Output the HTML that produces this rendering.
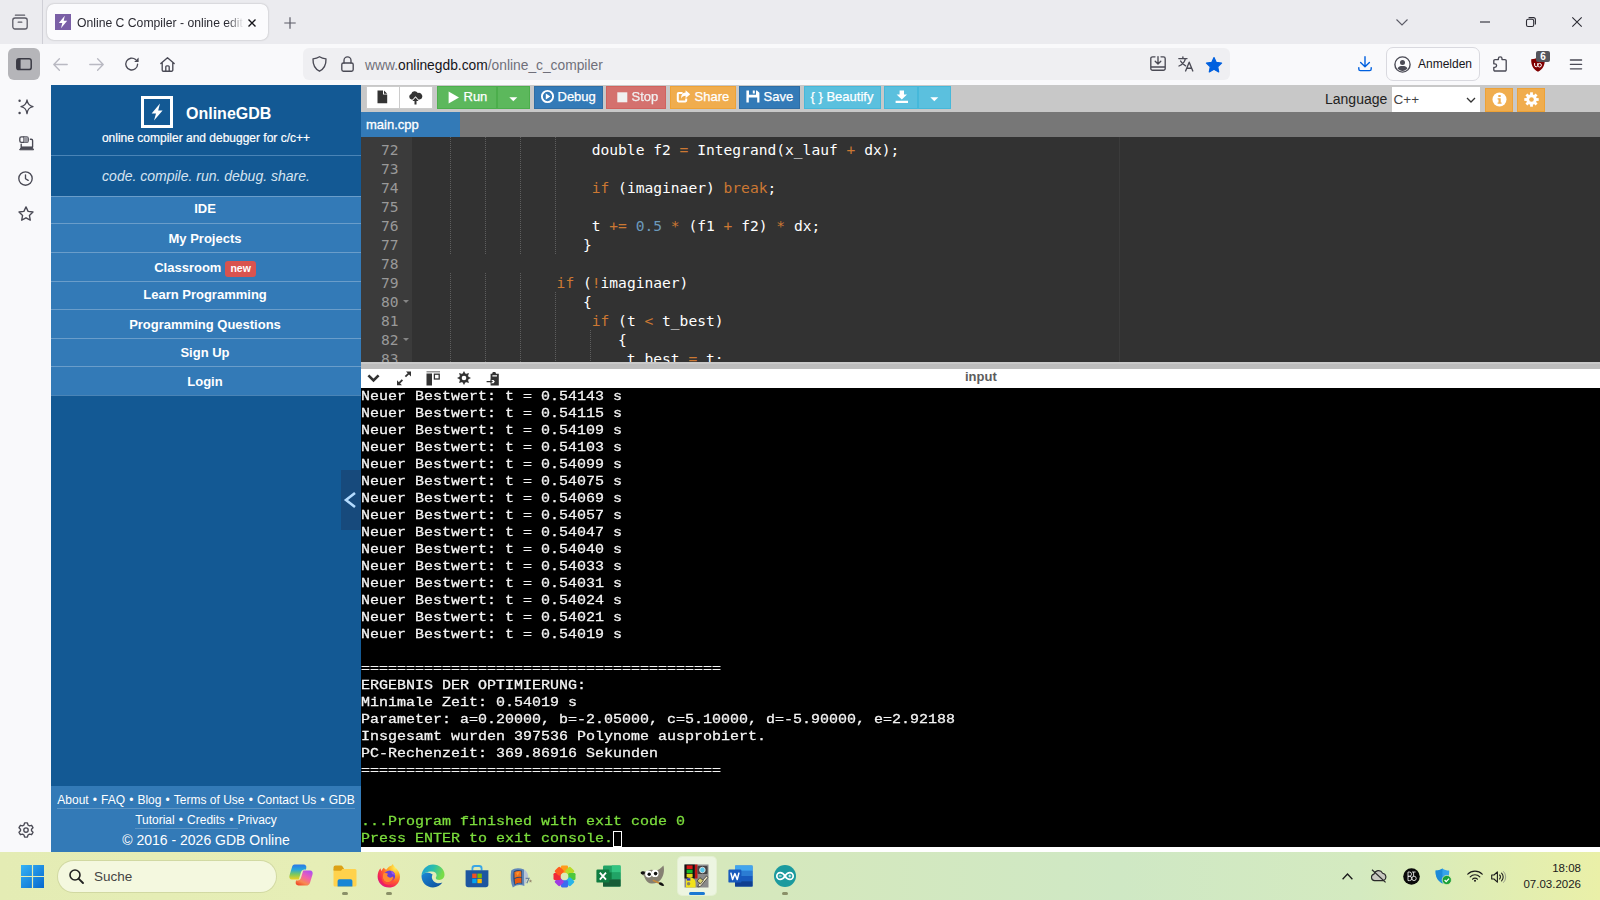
<!DOCTYPE html>
<html lang="de">
<head>
<meta charset="utf-8">
<title>Online C Compiler - online editor</title>
<style>
*{box-sizing:border-box;margin:0;padding:0}
html,body{width:1600px;height:900px;overflow:hidden;background:#f9f9fb;font-family:"Liberation Sans",sans-serif}
.abs{position:absolute}
#tabbar{position:absolute;left:0;top:0;width:1600px;height:44px;background:#ebebef}
#navbar{position:absolute;left:0;top:44px;width:1600px;height:41px;background:#f9f9fb}
#ffside{position:absolute;left:0;top:85px;width:51px;height:767px;background:#f9f9fb}
#page{position:absolute;left:51px;top:85px;width:1549px;height:767px;background:#000;overflow:hidden}
#taskbar{position:absolute;left:0;top:852px;width:1600px;height:48px;background:linear-gradient(90deg,#e4ecb4 0%,#e6eeb6 20%,#d6e8bc 45%,#cfe8c4 70%,#d4eac0 85%,#eaf0a8 100%)}

/* ---- browser chrome ---- */
#tabbar svg,#navbar svg,#ffside svg,#taskbar svg{position:absolute;overflow:visible}
#tsep{position:absolute;left:42px;top:0;width:1px;height:44px;background:#cfcfd6}
#tab{position:absolute;left:47px;top:4px;width:221px;height:36px;background:#fbfbfd;border-radius:7px;box-shadow:0 0 2px rgba(0,0,0,.28)}
#fav{position:absolute;left:8px;top:10px;width:16px;height:16px;background:#7a5fa6}
#ttl{position:absolute;left:30px;top:10px;width:168px;height:18px;overflow:hidden;white-space:nowrap;font-size:12.2px;line-height:18px;color:#2a2a32;-webkit-mask-image:linear-gradient(90deg,#000 0,#000 150px,transparent 167px);mask-image:linear-gradient(90deg,#000 0,#000 150px,transparent 167px)}
#sbtn{position:absolute;left:8px;top:4px;width:32px;height:32px;border-radius:6px;background:#b5b5b9}
#url{position:absolute;left:303px;top:4px;width:927px;height:32px;border-radius:6px;background:#efeff2}
#urlt{position:absolute;left:62px;top:7.5px;font-size:13.8px;line-height:20px;color:#15141a;white-space:nowrap}
#urlt i{font-style:normal;color:#6f6f7a}
#anm{position:absolute;left:1386px;top:3px;width:94px;height:34px;border:1px solid #d9d9df;border-radius:7px;background:#fbfbfd}
#anmt{position:absolute;left:31px;top:8px;font-size:12px;line-height:16px;color:#15141a;white-space:nowrap}
#ubadge{position:absolute;left:1536px;top:7px;width:14px;height:11px;background:#55555c;border-radius:2px;color:#fff;font-size:10px;font-weight:bold;line-height:11px;text-align:center}

/* ---- taskbar ---- */
#srch{position:absolute;left:58px;top:8.5px;width:218px;height:31px;border-radius:16px;background:#f4f8df;box-shadow:0 0 0 1px rgba(120,130,80,.18)}
#srcht{position:absolute;left:36px;top:7px;font-size:13.5px;line-height:17px;color:#444;white-space:nowrap}
#actv{position:absolute;left:678px;top:5px;width:38px;height:38px;border-radius:4px;background:rgba(255,255,255,.55);box-shadow:0 0 0 1px rgba(255,255,255,.35)}
.dot{position:absolute;top:40px;width:6px;height:3px;border-radius:1.5px;background:#8a9068}
#clk{position:absolute;right:19px;top:9px;text-align:right;font-size:11.5px;line-height:15.7px;color:#1b1b1b;white-space:nowrap}
/* --- left panel --- */
#left{position:absolute;left:0;top:0;width:310px;height:767px;background:#135994;color:#fff}
#main{position:absolute;left:310px;top:0;width:1239px;height:767px}

/* left panel content */
#logo{position:absolute;left:90px;top:11px;width:32px;height:32px;border:3px solid #fff}
#brand{position:absolute;left:135px;top:19px;font-size:16px;font-weight:bold;line-height:20px;white-space:nowrap}
#sub{-webkit-text-stroke:.2px #fff;position:absolute;left:0;top:46px;width:310px;text-align:center;font-size:12px;line-height:14px;white-space:nowrap}
.hl{position:absolute;left:0;width:310px;height:1px;background:#4a84b6}
#slogan{position:absolute;left:0;top:82px;width:310px;text-align:center;font-size:14px;font-style:italic;line-height:18px;color:#d6e4f0;white-space:nowrap}
#menu{position:absolute;left:0;top:111px;width:310px;height:199px;background:#337ab7}
.mi{position:absolute;left:0;width:310px;height:29px;border-top:1px solid #6a9dca;text-align:center;padding-right:2px;font-size:13px;font-weight:bold;line-height:27px;white-space:nowrap;color:#fff}
.new{display:inline-block;background:#d9534f;color:#fff;font-size:10.5px;font-weight:bold;line-height:11px;padding:2px 5px 3px;border-radius:3px;vertical-align:0;margin-left:4px}
#foot{position:absolute;left:0;top:701px;width:310px;height:66px;background:#337ab7;color:#fff;text-align:center}
#foot .l{position:absolute;left:0;width:310px;text-align:center;font-size:12px;line-height:14px;white-space:nowrap}
#foot .l span.u{border-bottom:1px solid rgba(255,255,255,.2);padding-bottom:1px}
#foot .l i{font-style:normal;padding:0 4.1px}
#foot .c{position:absolute;left:0;top:45px;width:310px;font-size:14px;line-height:18px;white-space:nowrap}
#handle{position:absolute;left:290px;top:385px;width:20px;height:60px;background:#174a7c}
/* --- toolbar --- */
#toolbar{position:absolute;left:0;top:0;width:1239px;height:27px;background:#c8c8c8}

.btn{position:absolute;top:1px;height:22.5px;border:1px solid;color:#fff;font-size:13px;line-height:20.5px;white-space:nowrap}
.btn span{position:absolute;top:0;-webkit-text-stroke:.25px #fff}
.btn svg{position:absolute}
.bw{background:#fff;border-color:#ccc}
.bg{background:#5cb85c;border-color:#4cae4c}
.bp{background:#337ab7;border-color:#2e6da4}
.bd{background:#d9534f;border-color:#d43f3a;opacity:.74}
.bo{background:#f0ad4e;border-color:#eea236}
.bi{background:#5bc0de;border-color:#46b8da}
#lang{position:absolute;left:964px;top:5px;font-size:14px;line-height:18px;color:#222;white-space:nowrap}
#sel{position:absolute;left:1031px;top:2px;width:88px;height:24.5px;background:#fff;font-size:13.5px;line-height:25px;color:#444;padding-left:1.5px}
#tab1{-webkit-text-stroke:.3px #fff;position:absolute;left:0;top:0;width:99px;height:25px;background:#337ab7;color:#fff;font-size:13px;line-height:26px;padding-left:5px;white-space:nowrap}
#tabs{position:absolute;left:0;top:27px;width:1239px;height:25px;background:#777}
#editor{position:absolute;left:0;top:52px;width:1239px;height:225px;background:#323232;overflow:hidden}

#gutter{position:absolute;left:0;top:0;width:51px;height:225px;background:#3b3b3b}
.ln{position:absolute;left:0;width:37.5px;text-align:right;color:#999;font:14.6px/19px "DejaVu Sans Mono","Liberation Mono",monospace;height:19px;white-space:pre}
.cl{position:absolute;left:55px;color:#fff;font:14.6px/19px "DejaVu Sans Mono","Liberation Mono",monospace;height:19px;white-space:pre}
.k{color:#cc7833}.n{color:#6c99bb}
.ig{position:absolute;width:1px;background:repeating-linear-gradient(180deg,#5e5e5e 0,#5e5e5e 1px,transparent 1px,transparent 2px)}
.fa{position:absolute;left:42px;width:0;height:0;border-left:3px solid transparent;border-right:3px solid transparent;border-top:3.5px solid #858585}
#pm{position:absolute;left:758px;top:0;width:1px;height:225px;background:#3b3b3b}
#split{position:absolute;left:0;top:277px;width:1239px;height:6.5px;background:linear-gradient(180deg,#c9c9c9 0,#c9c9c9 2px,#bdbdbd 2px,#bdbdbd 100%)}
#ctool{position:absolute;left:0;top:283.5px;width:1239px;height:19.5px;background:#fff}
#console{position:absolute;left:0;top:303px;width:1239px;height:459px;background:#000}

#ctool svg{position:absolute}
#inlab{position:absolute;left:604px;top:-0.5px;font-size:13px;font-weight:bold;line-height:17px;color:#5c5c5c;white-space:nowrap}
#con{position:absolute;left:0;top:0;font:normal 15px/17px "Liberation Mono",monospace;color:#f4f4f4;-webkit-text-stroke:.32px currentColor}
#con div{position:absolute;left:0;height:17px;white-space:pre;transform:scaleY(.82);transform-origin:0 12.5px}
#con .g{color:#7bdc3c}
#cur{position:absolute;left:252px;top:442.5px;width:9px;height:16px;border:1px solid #fff}
#cbottom{position:absolute;left:0;top:762px;width:1239px;height:5px;background:#fff}
</style>
</head>
<body>
<div id="tabbar">
  <svg style="left:12px;top:14px" width="16" height="16" viewBox="0 0 16 16"><g fill="none" stroke="#5b5b66" stroke-width="1.3" stroke-linecap="round" stroke-linejoin="round"><path d="M3.4 1.2 H12.6"/><rect x="0.8" y="4" width="14.4" height="11" rx="2.2"/><path d="M6.2 8.2 H9.8"/></g></svg>
  <div id="tsep"></div>
  <div id="tab"><div id="fav"><svg style="left:0;top:0" width="16" height="16" viewBox="0 0 16 16"><path d="M9.8 1.8 L3.8 9 H7.3 L6 14.2 L12.2 6.8 H8.7 Z" fill="#fff"/></svg></div><div id="ttl">Online C Compiler - online editor</div>
    <svg style="left:201px;top:14.5px" width="8" height="8" viewBox="0 0 8 8"><path d="M0.5 0.5 L7.5 7.5 M7.5 0.5 L0.5 7.5" fill="none" stroke="#15141a" stroke-width="1.4"/></svg></div>
  <svg style="left:284px;top:17px" width="12" height="12" viewBox="0 0 12 12"><path d="M6 0.3 V11.7 M0.3 6 H11.7" fill="none" stroke="#5b5b66" stroke-width="1.2"/></svg>
  <svg style="left:1396px;top:18.5px" width="12" height="7" viewBox="0 0 12 7"><path d="M0.5 0.5 L6 6 L11.5 0.5" fill="none" stroke="#5b5b66" stroke-width="1.1"/></svg>
  <svg style="left:1480px;top:20.5px" width="10" height="2" viewBox="0 0 10 2"><path d="M0 1 H10" stroke="#2b2a33" stroke-width="1.1"/></svg>
  <svg style="left:1526px;top:16.5px" width="10" height="10" viewBox="0 0 10 10"><g fill="none" stroke="#2b2a33" stroke-width="1.1"><rect x="0.5" y="2.3" width="7.2" height="7.2" rx="1.6"/><path d="M2.6 0.6 H7.6 A1.8 1.8 0 0 1 9.4 2.4 V7.4"/></g></svg>
  <svg style="left:1572px;top:17px" width="10" height="10" viewBox="0 0 10 10"><path d="M0.3 0.3 L9.7 9.7 M9.7 0.3 L0.3 9.7" fill="none" stroke="#2b2a33" stroke-width="1.1"/></svg>
</div>
<div id="navbar">
  <div id="sbtn"><svg style="left:8px;top:9.5px" width="16" height="13" viewBox="0 0 16 13"><rect x="0.8" y="0.8" width="14.4" height="10.8" rx="2.2" fill="none" stroke="#3a3a44" stroke-width="1.5"/><path d="M0.8 3 A2.2 2.2 0 0 1 3 0.8 H4.6 V11.6 H3 A2.2 2.2 0 0 1 0.8 9.4 Z" fill="#3a3a44"/></svg></div>
  <svg style="left:53px;top:14px" width="15" height="13" viewBox="0 0 15 13"><path d="M6.4 0.8 L0.8 6.5 L6.4 12.2 M1 6.5 H14.2" fill="none" stroke="#b9b9c2" stroke-width="1.35" stroke-linecap="round" stroke-linejoin="round"/></svg>
  <svg style="left:89px;top:14px" width="15" height="13" viewBox="0 0 15 13"><path d="M8.6 0.8 L14.2 6.5 L8.6 12.2 M14 6.5 H0.8" fill="none" stroke="#b9b9c2" stroke-width="1.35" stroke-linecap="round" stroke-linejoin="round"/></svg>
  <svg style="left:125px;top:13px" width="15" height="14" viewBox="0 0 15 14"><path d="M12.6 7.2 A5.9 5.9 0 1 1 10.6 2.6" fill="none" stroke="#4a4a55" stroke-width="1.35" stroke-linecap="round" stroke-linejoin="round"/><path d="M13.6 0.6 V5 H9.2 Z" fill="#4a4a55"/></svg>
  <svg style="left:160px;top:13px" width="15" height="15" viewBox="0 0 15 15"><path d="M0.8 6.6 L7.5 0.8 L14.2 6.6 M2.2 5.6 V13 A1.2 1.2 0 0 0 3.4 14.2 H11.6 A1.2 1.2 0 0 0 12.8 13 V5.6 M5.8 14 V9.8 A1 1 0 0 1 6.8 8.8 H8.2 A1 1 0 0 1 9.2 9.8 V14" fill="none" stroke="#4a4a55" stroke-width="1.35" stroke-linecap="round" stroke-linejoin="round"/></svg>
  <div id="url">
    <svg style="left:9px;top:8px" width="15" height="16" viewBox="0 0 15 16"><path d="M7.5 0.8 C5.6 2 3.4 2.6 1 2.8 C0.8 8.6 2.6 12.8 7.5 15.2 C12.4 12.8 14.2 8.6 14 2.8 C11.6 2.6 9.4 2 7.5 0.8 Z" fill="none" stroke="#4a4a55" stroke-width="1.35" stroke-linecap="round" stroke-linejoin="round"/></svg>
    <svg style="left:38px;top:8px" width="13" height="16" viewBox="0 0 13 16"><rect x="0.8" y="7" width="11.4" height="8.2" rx="1.6" fill="none" stroke="#4a4a55" stroke-width="1.35" stroke-linecap="round" stroke-linejoin="round"/><path d="M3 7 V4.4 A3.5 3.5 0 0 1 10 4.4 V7" fill="none" stroke="#4a4a55" stroke-width="1.35" stroke-linecap="round" stroke-linejoin="round"/></svg>
    <div id="urlt"><i>www.</i>onlinegdb.com<i>/online_c_compiler</i></div>
    <svg style="left:847px;top:8px" width="16" height="15" viewBox="0 0 16 15"><path d="M5 0.8 H2.6 A1.8 1.8 0 0 0 0.8 2.6 V12.4 A1.8 1.8 0 0 0 2.6 14.2 H13.4 A1.8 1.8 0 0 0 15.2 12.4 V2.6 A1.8 1.8 0 0 0 13.4 0.8 H11 M0.8 11 H15.2 M8 0.6 V7.6 M5.2 5.2 L8 8 L10.8 5.2" fill="none" stroke="#4a4a55" stroke-width="1.35" stroke-linecap="round" stroke-linejoin="round"/></svg>
    <svg style="left:875px;top:8px" width="16" height="16" viewBox="0 0 16 16"><path d="M0.8 2.6 H9 M4.9 0.8 V2.6 M7.4 2.6 C6.8 5.6 4.6 8.4 1 10 M2.6 5 C3.6 7 5.4 8.8 7.6 9.8 M7.6 15 L11.2 6.2 L14.8 15 M8.8 12.2 H13.6" fill="none" stroke="#4a4a55" stroke-width="1.35" stroke-linecap="round" stroke-linejoin="round"/></svg>
    <svg style="left:902px;top:8.5px" width="18" height="16" viewBox="0 0 18 16"><path d="M9 0.6 L11.3 5.4 L16.6 6.1 L12.7 9.7 L13.7 14.9 L9 12.3 L4.3 14.9 L5.3 9.7 L1.4 6.1 L6.7 5.4 Z" fill="#0060df" stroke="#0060df" stroke-width="1.2" stroke-linejoin="round"/></svg>
  </div>
  <svg style="left:1358px;top:12px" width="14" height="16" viewBox="0 0 14 16"><path d="M7 0.8 V10.4 M2.6 6.4 L7 10.8 L11.4 6.4 M0.8 11.6 V13 A1.6 1.6 0 0 0 2.4 14.6 H11.6 A1.6 1.6 0 0 0 13.2 13 V11.6" fill="none" stroke="#0060df" stroke-width="1.4" stroke-linecap="round" stroke-linejoin="round"/></svg>
  <div id="anm"><svg style="left:7px;top:8px" width="17" height="17" viewBox="0 0 17 17"><circle cx="8.5" cy="8.5" r="7.6" fill="none" stroke="#4a4a55" stroke-width="1.4"/><circle cx="8.5" cy="6.6" r="2.5" fill="#4a4a55"/><path d="M3.6 12.6 C4.4 10.6 6 10 8.5 10 C11 10 12.6 10.6 13.4 12.6 C12 14.2 10.4 15 8.5 15 C6.6 15 5 14.2 3.6 12.6 Z" fill="#4a4a55"/></svg><div id="anmt">Anmelden</div></div>
  <svg style="left:1493px;top:12px" width="15" height="16" viewBox="0 0 15 16"><path d="M5.4 3.6 V2.6 A1.8 1.8 0 0 1 9 2.6 V3.6 H12 A1.2 1.2 0 0 1 13.2 4.8 V13.8 A1.2 1.2 0 0 1 12 15 H2 A1.2 1.2 0 0 1 0.8 13.8 V11.4 H1.8 A1.8 1.8 0 0 0 1.8 7.8 H0.8 V4.8 A1.2 1.2 0 0 1 2 3.6 Z" fill="none" stroke="#4a4a55" stroke-width="1.35" stroke-linecap="round" stroke-linejoin="round"/></svg>
  <svg style="left:1531px;top:13px" width="14" height="15" viewBox="0 0 14 15"><path d="M7 0.2 C5 1.4 2.8 2 0.2 2.2 C0 8 2 12.2 7 14.8 C12 12.2 14 8 13.8 2.2 C11.2 2 9 1.4 7 0.2 Z" fill="#800000"/><path d="M3.6 6 V8.2 A1.6 1.6 0 0 0 6.8 8.2 V6 M6.8 8.2 A1.8 1.8 0 1 0 10.4 8.2 A1.8 1.8 0 1 0 6.8 8.2" fill="none" stroke="#fff" stroke-width="1"/></svg>
  <div id="ubadge">6</div>
  <svg style="left:1570px;top:14.5px" width="12" height="11" viewBox="0 0 12 11"><path d="M0.4 1 H11.6 M0.4 5.4 H11.6 M0.4 9.8 H11.6" fill="none" stroke="#4a4a55" stroke-width="1.3" stroke-linecap="round"/></svg>
</div>
<div id="ffside">
  <svg style="left:18px;top:14px" width="16" height="16" viewBox="0 0 16 16"><path d="M9 1 C9.6 5 11 6.6 15 7.6 C11 8.6 9.6 10.2 9 14.6 C8.4 10.2 7 8.6 3 7.6 C7 6.6 8.4 5 9 1 Z" fill="none" stroke="#4a4a55" stroke-width="1.35" stroke-linecap="round" stroke-linejoin="round"/><circle cx="1.6" cy="1.8" r="1.2" fill="#4a4a55"/><circle cx="1.6" cy="14" r="1.2" fill="#4a4a55"/></svg>
  <svg style="left:19px;top:51px" width="15" height="15" viewBox="0 0 15 15"><rect x="0.8" y="0.8" width="8.4" height="5.6" rx="1.6" fill="none" stroke="#4a4a55" stroke-width="1.35" stroke-linecap="round" stroke-linejoin="round"/><path d="M5 0.8 V6.4" fill="none" stroke="#4a4a55" stroke-width="1.35" stroke-linecap="round" stroke-linejoin="round"/><path d="M5 0.8 H7.4 A1.6 1.6 0 0 1 9 2.4 V4.8 A1.6 1.6 0 0 1 7.4 6.4 H5 Z" fill="#9a9aa2"/><path d="M11.4 3.2 H12.2 A1.4 1.4 0 0 1 13.6 4.6 V11 M2.2 8.2 V11 M2.2 11.2 H13.4" fill="none" stroke="#4a4a55" stroke-width="1.35" stroke-linecap="round" stroke-linejoin="round"/><path d="M0.6 13.8 L2.2 11.4 H13.2 L14.6 13.8 Z" fill="#4a4a55" stroke="#4a4a55" stroke-width="1" stroke-linejoin="round"/></svg>
  <svg style="left:18px;top:85.5px" width="15" height="15" viewBox="0 0 15 15"><circle cx="7.5" cy="7.5" r="6.7" fill="none" stroke="#4a4a55" stroke-width="1.35" stroke-linecap="round" stroke-linejoin="round"/><path d="M7.5 3.8 V7.7 L10.2 9.4" fill="none" stroke="#4a4a55" stroke-width="1.35" stroke-linecap="round" stroke-linejoin="round"/></svg>
  <svg style="left:18px;top:120.5px" width="16" height="15" viewBox="0 0 16 15"><path d="M8 0.9 L10.1 5.4 L15 6 L11.4 9.4 L12.3 14.2 L8 11.8 L3.7 14.2 L4.6 9.4 L1 6 L5.9 5.4 Z" fill="none" stroke="#4a4a55" stroke-width="1.35" stroke-linecap="round" stroke-linejoin="round"/></svg>
  <svg style="left:18px;top:737px" width="16" height="16" viewBox="0 0 16 16"><path d="M6.6 0.9 H9.4 L10 3 L11.5 3.9 L13.6 3.3 L15 5.7 L13.5 7.2 V8.8 L15 10.3 L13.6 12.7 L11.5 12.1 L10 13 L9.4 15.1 H6.6 L6 13 L4.5 12.1 L2.4 12.7 L1 10.3 L2.5 8.8 V7.2 L1 5.7 L2.4 3.3 L4.5 3.9 L6 3 Z" fill="none" stroke="#4a4a55" stroke-width="1.35" stroke-linecap="round" stroke-linejoin="round"/><circle cx="8" cy="8" r="2.2" fill="none" stroke="#4a4a55" stroke-width="1.35" stroke-linecap="round" stroke-linejoin="round"/></svg>
</div>
<div id="page">
  <div id="left">
    <div id="logo"><svg width="26" height="26" viewBox="0 0 26 26"><path d="M16 4.6 L7.6 14.4 L12 14.4 L10 21.4 L18.6 11.4 L14.2 11.4 Z" fill="#fff"/></svg></div>
    <div id="brand">OnlineGDB</div>
    <div id="sub">online compiler and debugger for c/c++</div>
    <div class="hl" style="top:70px"></div>
    <div id="slogan">code. compile. run. debug. share.</div>
    <div id="menu">
      <div class="mi" style="top:0;line-height:24px">IDE</div>
      <div class="mi" style="top:27px;line-height:29px">My Projects</div>
      <div class="mi" style="top:56px;line-height:29px">Classroom<span class="new">new</span></div>
      <div class="mi" style="top:84.5px;line-height:26px">Learn Programming</div>
      <div class="mi" style="top:113px;line-height:29px">Programming Questions</div>
      <div class="mi" style="top:141.5px;line-height:28px">Sign Up</div>
      <div class="mi" style="top:170px;line-height:29px">Login</div>
    </div>
    <div class="hl" style="top:310px"></div>
    <div id="foot">
      <div class="l" style="top:7px"><span class="u">About<i>•</i>FAQ<i>•</i>Blog<i>•</i>Terms of Use<i>•</i>Contact Us<i>•</i>GDB</span></div>
      <div class="l" style="top:27px"><span class="u">Tutorial<i>•</i>Credits<i>•</i></span>Privacy</div>
      <div class="c">© 2016 - 2026 GDB Online</div>
    </div>
    <div id="handle"><svg width="20" height="60" viewBox="0 0 20 60"><path d="M14 23 L5 30 L14 37" fill="none" stroke="#b4dcff" stroke-width="2.6"/></svg></div>
  </div>
  <div id="main">
    <div id="toolbar">
      <div class="btn bw" style="left:5px;width:34px"><svg style="left:9.5px;top:3px" width="11" height="14" viewBox="0 0 11 14"><path d="M0.5 0.5 H6 V4.6 H10.2 V13.2 H0.5 Z M7 0.5 L10.2 3.7 H7 Z" fill="#333"/></svg></div>
      <div class="btn bw" style="left:38px;width:33.5px"><svg style="left:8px;top:3.5px" width="15" height="14" viewBox="0 0 15 14"><path d="M3.4 8.6 A3 3 0 0 1 3.2 2.9 A3.6 3.6 0 0 1 9.8 2 A3.3 3.3 0 0 1 11.8 8.6 H10.4 L7.5 5.2 L4.6 8.6 Z" fill="#333"/><path d="M7.5 6.4 L10.6 10 H8.5 V13.4 H6.5 V10 H4.4 Z" fill="#333"/></svg></div>
      <div class="btn bg" style="left:76px;width:60px"><svg style="left:9.5px;top:4px" width="12" height="13" viewBox="0 0 12 13"><path d="M0.6 0.4 L11 6.4 L0.6 12.4 Z" fill="#fff"/></svg><span style="left:25.5px">Run</span></div>
      <div class="btn bg" style="left:135.5px;width:33.5px"><svg style="left:11.5px;top:10px" width="9" height="5" viewBox="0 0 9 5"><path d="M0.3 0.3 H8.3 L4.3 4.3 Z" fill="#fff"/></svg></div>
      <div class="btn bp" style="left:173px;width:69px"><svg style="left:4.5px;top:1.5px" width="15" height="15" viewBox="0 0 15 15"><circle cx="7.5" cy="7.5" r="5.6" fill="none" stroke="#fff" stroke-width="1.9"/><path d="M5.8 4.6 L10.4 7.5 L5.8 10.4 Z" fill="#fff"/></svg><span style="left:22.5px">Debug</span></div>
      <div class="btn bd" style="left:245px;width:59.5px"><svg style="left:9.5px;top:4.5px" width="11" height="11" viewBox="0 0 11 11"><rect x="0.3" y="0.3" width="10" height="10" fill="#fff"/></svg><span style="left:24.5px">Stop</span></div>
      <div class="btn bo" style="left:309px;width:66px"><svg style="left:4.5px;top:2.5px" width="15" height="13" viewBox="0 0 15 13"><path d="M9.2 10.4 V8.6 H11.2 V10.6 A1.8 1.8 0 0 1 9.4 12.4 H2.6 A1.8 1.8 0 0 1 0.8 10.6 V3.8 A1.8 1.8 0 0 1 2.6 2 H6.6 V4 H3 A0.3 0.3 0 0 0 2.8 4.3 V10.1 A0.3 0.3 0 0 0 3 10.4 Z" fill="#fff"/><path d="M9.6 0.2 L14.2 4.2 L9.6 8.2 V5.8 C7.4 5.8 6 6.6 5.2 8.8 C5 5 6.6 2.8 9.6 2.6 Z" fill="#fff"/></svg><span style="left:23.5px">Share</span></div>
      <div class="btn bp" style="left:378px;width:61px"><svg style="left:6px;top:3px" width="14" height="13" viewBox="0 0 14 13"><path d="M0.4 0.4 H3 V4.8 H10 V0.4 H11 L13.4 2.8 V12.4 H11.2 V7.6 H2.8 V12.4 H0.4 Z M6.8 0.4 H8.8 V3.6 H6.8 Z" fill="#fff"/></svg><span style="left:23.5px">Save</span></div>
      <div class="btn bi" style="left:443px;width:77px"><span style="left:5.5px">{ } Beautify</span></div>
      <div class="btn bi" style="left:523px;width:34px"><svg style="left:10px;top:3px" width="14" height="14" viewBox="0 0 14 14"><path d="M4.6 0.4 H9 V4.6 H12 L6.8 9.6 L1.6 4.6 H4.6 Z M0.6 10.8 H13 V13 H0.6 Z" fill="#fff"/></svg></div>
      <div class="btn bi" style="left:556.5px;width:33.5px"><svg style="left:11.5px;top:10px" width="9" height="5" viewBox="0 0 9 5"><path d="M0.3 0.3 H8.3 L4.3 4.3 Z" fill="#fff"/></svg></div>
      <div id="lang">Language</div>
      <div id="sel">C++<svg style="position:absolute;left:74px;top:10px" width="10" height="7" viewBox="0 0 10 7"><path d="M1 1 L5 5 L9 1" fill="none" stroke="#333" stroke-width="1.3"/></svg></div>
      <div class="btn bo" style="left:1124px;top:3px;width:28px;height:24px"><svg style="left:6px;top:3px" width="15" height="15" viewBox="0 0 15 15"><circle cx="7.5" cy="7.5" r="7" fill="#fff"/><path d="M6.3 3 H8.7 V5 H6.3 Z M5.6 6.2 H8.7 V10.4 H9.6 V11.8 H5.6 V10.4 H6.5 V7.6 H5.6 Z" fill="#f0ad4e"/></svg></div>
      <div class="btn bo" style="left:1156px;top:3px;width:28px;height:24px"><svg style="left:6px;top:3px" width="15" height="15" viewBox="0 0 15 15"><g fill="#fff"><circle cx="7.5" cy="7.5" r="5.2"/><rect x="6.1" y="0.3" width="2.8" height="14.4"/><rect x="6.1" y="0.3" width="2.8" height="14.4" transform="rotate(45 7.5 7.5)"/><rect x="6.1" y="0.3" width="2.8" height="14.4" transform="rotate(90 7.5 7.5)"/><rect x="6.1" y="0.3" width="2.8" height="14.4" transform="rotate(135 7.5 7.5)"/></g><circle cx="7.5" cy="7.5" r="2.3" fill="#f0ad4e"/></svg></div>
    </div>
    <div id="tabs"><div id="tab1">main.cpp</div></div>
    <div id="editor">
<div id="gutter"></div>
<div id="pm"></div>
<div class="ln" style="top:2.5px">72</div>
<div class="cl" style="top:2.5px">                    double f2 <span class="k">=</span> Integrand(x_lauf <span class="k">+</span> dx);</div>
<div class="ln" style="top:21.5px">73</div>
<div class="ln" style="top:40.5px">74</div>
<div class="cl" style="top:40.5px">                    <span class="k">if</span> (imaginaer) <span class="k">break</span>;</div>
<div class="ln" style="top:59.5px">75</div>
<div class="ln" style="top:78.5px">76</div>
<div class="cl" style="top:78.5px">                    t <span class="k">+=</span> <span class="n">0.5</span> <span class="k">*</span> (f1 <span class="k">+</span> f2) <span class="k">*</span> dx;</div>
<div class="ln" style="top:97.5px">77</div>
<div class="cl" style="top:97.5px">                   }</div>
<div class="ln" style="top:116.5px">78</div>
<div class="ln" style="top:135.5px">79</div>
<div class="cl" style="top:135.5px">                <span class="k">if</span> (<span class="k">!</span>imaginaer)</div>
<div class="ln" style="top:154.5px">80</div>
<div class="cl" style="top:154.5px">                   {</div>
<div class="ln" style="top:173.5px">81</div>
<div class="cl" style="top:173.5px">                    <span class="k">if</span> (t <span class="k">&lt;</span> t_best)</div>
<div class="ln" style="top:192.5px">82</div>
<div class="cl" style="top:192.5px">                       {</div>
<div class="ln" style="top:211.5px">83</div>
<div class="cl" style="top:211.5px">                        t_best <span class="k">=</span> t;</div>
<div class="ig" style="left:89px;top:0px;height:117.5px"></div>
<div class="ig" style="left:124px;top:0px;height:117.5px"></div>
<div class="ig" style="left:159px;top:0px;height:117.5px"></div>
<div class="ig" style="left:194px;top:0px;height:117.5px"></div>
<div class="ig" style="left:89px;top:135.5px;height:95px"></div>
<div class="ig" style="left:124px;top:135.5px;height:95px"></div>
<div class="ig" style="left:159px;top:135.5px;height:95px"></div>
<div class="ig" style="left:194px;top:154.5px;height:76px"></div>
<div class="ig" style="left:229px;top:192.5px;height:38px"></div>
<div class="fa" style="top:162.5px"></div>
<div class="fa" style="top:200.5px"></div>
</div>
    <div id="split"></div>
    <div id="ctool">
      <svg style="left:6px;top:5.5px" width="13" height="9" viewBox="0 0 13 9"><path d="M1.4 1.4 L6.5 6.4 L11.6 1.4" fill="none" stroke="#333" stroke-width="2.7"/></svg>
      <svg style="left:35px;top:2.5px" width="16" height="15" viewBox="0 0 16 15"><g fill="none" stroke="#333" stroke-width="1.8"><path d="M9.4 5.6 L13.6 1.6"/><path d="M6.4 8.8 L2.4 12.8"/></g><path d="M10 0.4 H15 V5.4 Z M1 14.2 V9.2 L6 14.2 Z" fill="#333"/></svg>
      <svg style="left:65px;top:2.5px" width="15" height="15" viewBox="0 0 15 15"><path d="M0.5 0.4 H14 V1.3 H0.5 Z M0.5 2.6 H6 V14.4 H0.5 Z" fill="#333"/><rect x="8.4" y="3.2" width="4.8" height="4.8" fill="none" stroke="#333" stroke-width="1.3"/></svg>
      <svg style="left:96px;top:2.5px" width="14" height="14" viewBox="0 0 14 14"><g fill="#333"><circle cx="7" cy="7" r="4.6"/><path d="M7 0 L8.6 3 H5.4 Z" /><path d="M7 0 L8.6 3 H5.4 Z" transform="rotate(45 7 7)"/><path d="M7 0 L8.6 3 H5.4 Z" transform="rotate(90 7 7)"/><path d="M7 0 L8.6 3 H5.4 Z" transform="rotate(135 7 7)"/><path d="M7 0 L8.6 3 H5.4 Z" transform="rotate(180 7 7)"/><path d="M7 0 L8.6 3 H5.4 Z" transform="rotate(225 7 7)"/><path d="M7 0 L8.6 3 H5.4 Z" transform="rotate(270 7 7)"/><path d="M7 0 L8.6 3 H5.4 Z" transform="rotate(315 7 7)"/></g><circle cx="7" cy="7" r="2.3" fill="#fff"/></svg>
      <svg style="left:125px;top:3.5px" width="14" height="14" viewBox="0 0 14 14"><path d="M4.6 1.8 H6.2 A1.9 1.9 0 0 1 10 1.8 H12.8 V13.4 H4.6 V11.2 H7.6 L8.8 9.6 L7.6 8 H4.6 Z M6.4 3.2 V4.6 H11 V3.2 Z" fill="#333" fill-rule="evenodd"/><path d="M0.6 8.9 H4.4 V7.6 L7 9.6 L4.4 11.6 V10.3 H0.6 Z" fill="#333"/></svg>
      <div id="inlab">input</div>
    </div>
    <div id="console"><div id="con"><div style="top:-0.5px">Neuer Bestwert: t = 0.54143 s</div>
<div style="top:16.5px">Neuer Bestwert: t = 0.54115 s</div>
<div style="top:33.5px">Neuer Bestwert: t = 0.54109 s</div>
<div style="top:50.5px">Neuer Bestwert: t = 0.54103 s</div>
<div style="top:67.5px">Neuer Bestwert: t = 0.54099 s</div>
<div style="top:84.5px">Neuer Bestwert: t = 0.54075 s</div>
<div style="top:101.5px">Neuer Bestwert: t = 0.54069 s</div>
<div style="top:118.5px">Neuer Bestwert: t = 0.54057 s</div>
<div style="top:135.5px">Neuer Bestwert: t = 0.54047 s</div>
<div style="top:152.5px">Neuer Bestwert: t = 0.54040 s</div>
<div style="top:169.5px">Neuer Bestwert: t = 0.54033 s</div>
<div style="top:186.5px">Neuer Bestwert: t = 0.54031 s</div>
<div style="top:203.5px">Neuer Bestwert: t = 0.54024 s</div>
<div style="top:220.5px">Neuer Bestwert: t = 0.54021 s</div>
<div style="top:237.5px">Neuer Bestwert: t = 0.54019 s</div>
<div style="top:271.5px">========================================</div>
<div style="top:288.5px">ERGEBNIS DER OPTIMIERUNG:</div>
<div style="top:305.5px">Minimale Zeit: 0.54019 s</div>
<div style="top:322.5px">Parameter: a=0.20000, b=-2.05000, c=5.10000, d=-5.90000, e=2.92188</div>
<div style="top:339.5px">Insgesamt wurden 397536 Polynome ausprobiert.</div>
<div style="top:356.5px">PC-Rechenzeit: 369.86916 Sekunden</div>
<div style="top:373.5px">========================================</div>
<div class="g" style="top:424.5px">...Program finished with exit code 0</div>
<div class="g" style="top:441.5px">Press ENTER to exit console.</div></div><div id="cur"></div></div>
    <div id="cbottom"></div>
  </div>
</div>
<div id="taskbar">
  <svg style="left:21px;top:13px" width="23" height="23" viewBox="0 0 23 23"><defs><linearGradient id="wg" x1="0" y1="0" x2="1" y2="1"><stop offset="0" stop-color="#35b3f5"/><stop offset="1" stop-color="#0768cf"/></linearGradient></defs><path d="M0 0 H10.9 V10.9 H0 Z M12.1 0 H23 V10.9 H12.1 Z M0 12.1 H10.9 V23 H0 Z M12.1 12.1 H23 V23 H12.1 Z" fill="url(#wg)"/></svg>
  <div id="srch"><svg style="left:11px;top:8px" width="15" height="15" viewBox="0 0 15 15"><circle cx="6" cy="6" r="5" fill="none" stroke="#222" stroke-width="1.6"/><path d="M9.8 9.8 L14 14" stroke="#222" stroke-width="1.9" stroke-linecap="round"/></svg><div id="srcht">Suche</div></div>
  <!-- copilot -->
  <svg style="left:289px;top:12px" width="24" height="22" viewBox="0 0 24 22"><defs><linearGradient id="cp1" x1="0" y1="0" x2="0" y2="1"><stop offset="0" stop-color="#2a78e8"/><stop offset=".35" stop-color="#28a8d8"/><stop offset=".65" stop-color="#7ac860"/><stop offset="1" stop-color="#f0d020"/></linearGradient><linearGradient id="cp2" x1=".8" y1="0" x2=".2" y2="1"><stop offset="0" stop-color="#b050f0"/><stop offset=".4" stop-color="#f060b0"/><stop offset=".75" stop-color="#f88a50"/><stop offset="1" stop-color="#f04828"/></linearGradient></defs><path d="M5.5 0.6 H14.6 C16.8 0.6 17.8 2.4 17.2 4.4 L16.8 5.8 C14.8 5.2 12.8 6 12 8.2 L9.8 15.4 H3 C0.8 15.4 -0.2 13.6 0.5 11.4 L2.9 3.4 C3.5 1.6 4.3 0.6 5.5 0.6 Z" fill="url(#cp1)"/><path d="M18.5 21.4 H9.4 C7.2 21.4 6.2 19.6 6.8 17.6 L7.2 16.2 C9.2 16.8 11.2 16 12 13.8 L14.2 6.6 H21 C23.2 6.6 24.2 8.4 23.5 10.6 L21.1 18.6 C20.5 20.4 19.7 21.4 18.5 21.4 Z" fill="url(#cp2)"/></svg>
  <!-- folder -->
  <svg style="left:333px;top:13px" width="24" height="22" viewBox="0 0 24 22"><path d="M0.5 2.6 A2 2 0 0 1 2.5 0.6 H7.6 C8.6 0.6 9.2 1 9.8 1.8 L11.4 4.4 H0.5 Z" fill="#dca114"/><path d="M0.5 5.8 L9.4 4 H22 A1.5 1.5 0 0 1 23.5 5.5 V20 A1.5 1.5 0 0 1 22 21.5 H2 A1.5 1.5 0 0 1 0.5 20 Z" fill="#ffd24c"/><path d="M0.5 4 H9.4 L8 5.8 H0.5 Z" fill="#dca114"/><path d="M4.6 21.5 V16 A1.8 1.8 0 0 1 6.4 14.2 H17.6 A1.8 1.8 0 0 1 19.4 16 V21.5 Z" fill="#1685d6"/></svg>
  <div class="dot" style="left:342px"></div>
  <!-- firefox -->
  <svg style="left:377px;top:12px" width="24" height="24" viewBox="0 0 24 24"><defs><radialGradient id="ff1" cx=".8" cy=".15" r="1"><stop offset="0" stop-color="#fff060"/><stop offset=".3" stop-color="#ffb020"/><stop offset=".6" stop-color="#ff5a30"/><stop offset=".85" stop-color="#f0205a"/><stop offset="1" stop-color="#d8188a"/></radialGradient></defs><path d="M13.4 2 C14.6 1.6 15.4 0.8 15.8 0 C16.6 2.2 18.4 3.2 20.2 5.4 C22.8 8.6 23.6 12 22.6 15.4 C21.2 20.4 17 23.6 12 23.6 C5.6 23.6 0.6 18.8 0.6 12.6 C0.6 9 1.8 6 3.6 4.2 C3.6 5.4 4 6.4 4.6 7 C5.2 5.4 6 4.4 7 3.8 C7.4 5 8.4 5.6 9.6 5.6 C10.4 4 11.8 2.6 13.4 2 Z" fill="url(#ff1)"/><circle cx="12.6" cy="12" r="5.6" fill="#6a40d8"/><path d="M14 6.8 C16.6 7.6 18 9.8 18 12 C17.4 10.6 16.2 10 15 10.2 Z" fill="#9a58f0"/><path d="M6.4 9.4 C8 8.6 10 9 11.2 10 C10 10.4 9.8 11.6 10.6 12.6 C11.8 14 14.4 14 16 12.6 C16.4 16 13.6 18.6 10.4 18.2 C6.6 17.8 4.8 13.6 6.4 9.4 Z" fill="#ff8a30"/><path d="M6.4 9.4 C4.8 13.6 6.6 17.8 10.4 18.2 C13.6 18.6 16.4 16 16 12.6 C18 17 15 21 10.6 20.6 C5.6 20.2 3.2 14.4 6.4 9.4 Z" fill="#ff4a3a"/></svg>
  <div class="dot" style="left:386px"></div>
  <!-- edge -->
  <svg style="left:421px;top:12px" width="24" height="24" viewBox="0 0 24 24"><defs><linearGradient id="ed1" x1="0" y1="0" x2="1" y2=".3"><stop offset="0" stop-color="#1c9ae0"/><stop offset=".55" stop-color="#2cc0a8"/><stop offset="1" stop-color="#78dc48"/></linearGradient><linearGradient id="ed2" x1="0" y1="0" x2="1" y2="1"><stop offset="0" stop-color="#1a8ad8"/><stop offset="1" stop-color="#0c4a98"/></linearGradient></defs><path d="M0.5 12 C0.5 18.4 5.6 23.5 12 23.5 C16 23.5 19.4 21.6 21.4 18.6 C18.4 20 14.6 19.4 12.4 17 C10.6 15 10.4 12.4 11.6 10.6 C8 7 1.4 8 0.5 12 Z" fill="url(#ed2)"/><path d="M0.5 12 C0.8 5.4 5.8 0.5 12 0.5 C18.4 0.5 23.5 5 23.5 10.6 C23.5 14 21.2 16 18.4 16 C16 16 14.8 15.2 14.8 14 C14.8 13 15.6 12.6 15.6 11.2 C15.6 9.2 13.6 7.6 11 7.6 C6.4 7.6 1.8 9.6 0.5 12 Z" fill="url(#ed1)"/></svg>
  <!-- store -->
  <svg style="left:465px;top:12px" width="24" height="24" viewBox="0 0 24 24"><path d="M7.4 6.6 V4.4 A2.4 2.4 0 0 1 9.8 2 H14.2 A2.4 2.4 0 0 1 16.6 4.4 V6.6" fill="none" stroke="#38a6e6" stroke-width="1.8"/><path d="M0.6 6.2 H23.4 V20.6 A2.6 2.6 0 0 1 20.8 23.2 H3.2 A2.6 2.6 0 0 1 0.6 20.6 Z" fill="#1c56a0"/><rect x="7.2" y="9.6" width="4.4" height="4.4" fill="#f25022"/><rect x="12.4" y="9.6" width="4.4" height="4.4" fill="#7fba00"/><rect x="7.2" y="14.8" width="4.4" height="4.4" fill="#00a4ef"/><rect x="12.4" y="14.8" width="4.4" height="4.4" fill="#ffb900"/></svg>
  <!-- movie maker -->
  <svg style="left:509px;top:15px" width="24" height="22" viewBox="0 0 24 22"><path d="M2.2 3.4 C6 0.6 10.6 0.6 15 2.6 L15.4 19 C11.4 17.4 7.4 17.8 3.8 20.6 C1.6 15.6 1.2 9 2.2 3.4 Z" fill="#5f86b8"/><path d="M4.6 4.4 C7.4 2.6 10.4 2.6 13 3.6 L13.2 17 C10.6 16.2 8 16.6 5.6 18.2 C4.2 14 4 9 4.6 4.4 Z" fill="#2a4a78"/><path d="M5.4 5.2 C7.6 4 10 3.8 12.2 4.6 L12.3 10 C10 9.4 7.8 9.8 5.6 11 Z" fill="#f0701a"/><path d="M5.7 12 C7.8 10.8 10 10.6 12.3 11 L12.4 16 C10.2 15.6 8.2 16 6.2 17.2 Z" fill="#e85a10"/><path d="M7 5.6 L10.6 5 L8.6 8.8 Z" fill="#f8a040" opacity=".8"/><path d="M15 2.6 C17.6 4 19 6.6 19.2 9.6 L15.4 19 Z" fill="#b8c4d8"/><path d="M16.6 11.4 H20 L17.8 16.2" fill="none" stroke="#6a7f9c" stroke-width="1.2"/><path d="M21.4 12.2 L22 13.4 L23.2 13.6 L22.2 14.4 L22.6 15.6 L21.4 15 L20.4 15.6 L20.7 14.4 L19.8 13.6 L21 13.4 Z" fill="#9a8a70"/></svg>
  <!-- photos color wheel -->
  <svg style="left:553px;top:13px" width="23" height="23" viewBox="0 0 23 23"><g transform="translate(11.5 11.5)"><rect x="-3.6" y="-11" width="7.2" height="7.2" rx="1.4" fill="#ff9c1a" transform="rotate(0)"/><rect x="-3.6" y="-11" width="7.2" height="7.2" rx="1.4" fill="#b8dc28" transform="rotate(45)"/><rect x="-3.6" y="-11" width="7.2" height="7.2" rx="1.4" fill="#4cc83c" transform="rotate(90)"/><rect x="-3.6" y="-11" width="7.2" height="7.2" rx="1.4" fill="#28b4e8" transform="rotate(135)"/><rect x="-3.6" y="-11" width="7.2" height="7.2" rx="1.4" fill="#3a6cf0" transform="rotate(180)"/><rect x="-3.6" y="-11" width="7.2" height="7.2" rx="1.4" fill="#a03ce0" transform="rotate(225)"/><rect x="-3.6" y="-11" width="7.2" height="7.2" rx="1.4" fill="#f02838" transform="rotate(270)"/><rect x="-3.6" y="-11" width="7.2" height="7.2" rx="1.4" fill="#ff5a1e" transform="rotate(315)"/></g></svg>
  <!-- excel -->
  <svg style="left:596px;top:13px" width="25" height="22" viewBox="0 0 25 22"><rect x="7" y="0.4" width="17.6" height="21.2" rx="1.4" fill="#21a366"/><rect x="15.8" y="0.4" width="8.8" height="7" fill="#33c481"/><rect x="7" y="7.4" width="8.8" height="7" fill="#107c41"/><rect x="15.8" y="7.4" width="8.8" height="7" fill="#21a366"/><rect x="7" y="14.4" width="17.6" height="7.2" fill="#185c37"/><rect x="0.4" y="4.6" width="13" height="13" rx="1.2" fill="#107c41"/><path d="M3.8 7.6 L10 14.6 M10 7.6 L3.8 14.6" stroke="#fff" stroke-width="1.8"/></svg>
  <!-- gimp -->
  <svg style="left:640px;top:13px" width="26" height="22" viewBox="0 0 26 22"><path d="M1.4 7.6 C3 5.8 5 6.2 6.6 7.2 C8.6 4.2 12.6 4.2 15 6 C18 5 21.4 3 23.4 0.4 C24.8 5 23.8 11 20.4 15 C17 19.2 10.4 19.8 7 16.4 C5.2 14.6 4.6 12.6 4 10.8 C2.8 10.6 1.6 9.4 1.4 7.6 Z" fill="#858073"/><circle cx="8.6" cy="9" r="3.4" fill="#fff"/><circle cx="15" cy="8.4" r="3.6" fill="#fff"/><circle cx="9.2" cy="9.2" r="1.7" fill="#111"/><circle cx="15.6" cy="8.6" r="1.8" fill="#111"/><ellipse cx="2.8" cy="7.8" rx="2.2" ry="1.6" fill="#111"/><path d="M13 14.4 L20 17.4 L19.2 19 L12.6 16 Z" fill="#c88a3a"/><path d="M19.6 17.2 C21.6 17 23.4 18.4 24.2 20.8 C22 21.2 20 20.4 18.8 18.8 Z" fill="#111"/></svg>
  <!-- active app -->
  <div id="actv"></div>
  <svg style="left:684px;top:12px" width="25" height="24" viewBox="0 0 25 24"><rect x="0.5" y="0.5" width="24" height="23" fill="#8a8a8a"/><rect x="0.5" y="0.5" width="10.4" height="14" fill="#111"/><rect x="2.6" y="1.4" width="6" height="3.6" fill="#d81818"/><rect x="2.6" y="5.6" width="6" height="3.6" fill="#18b828"/><rect x="2.6" y="9.8" width="6" height="3.6" fill="#e8d818"/><rect x="10.9" y="0.5" width="2.6" height="14" fill="#c01818"/><rect x="13.5" y="2" width="10" height="8" rx="1" fill="#444"/><circle cx="18.4" cy="6" r="2.8" fill="#58c8e8" stroke="#eee" stroke-width=".8"/><path d="M2 23.5 V17.6 C2 14.6 4.6 12.6 7.4 13.4 C10.4 14.2 11.8 16.6 11.6 19.6 V23.5 Z" fill="#f2e21a"/><circle cx="4.6" cy="19.8" r="1.7" fill="#8a8460"/><rect x="3" y="14.2" width="3.4" height="2.4" fill="#2838c8"/><path d="M14.6 20.6 L22.6 12 L24 13.4 L16.4 22.4 L13.8 23 Z" fill="#f0e8c8" stroke="#222" stroke-width=".7"/><rect x="14" y="14.6" width="4.4" height="4.4" fill="#d8d070" stroke="#222" stroke-width=".6" transform="rotate(40 16.2 16.8)"/></svg>
  <div style="position:absolute;left:689px;top:40px;width:16px;height:3px;border-radius:1.5px;background:#1a78d2"></div>
  <!-- word -->
  <svg style="left:728px;top:13px" width="25" height="22" viewBox="0 0 25 22"><rect x="7" y="0.4" width="17.6" height="21.2" rx="1.4" fill="#2b7cd3"/><rect x="7" y="0.4" width="17.6" height="5.4" fill="#41a5ee"/><rect x="7" y="5.8" width="17.6" height="5.2" fill="#2b7cd3"/><rect x="7" y="11" width="17.6" height="5.2" fill="#185abd"/><rect x="7" y="16.2" width="17.6" height="5.4" fill="#103f91"/><rect x="0.4" y="4.6" width="13" height="13" rx="1.2" fill="#185abd"/><path d="M2.8 7.6 L4.6 14.6 L6.9 8.6 L9.2 14.6 L11 7.6" fill="none" stroke="#fff" stroke-width="1.5" stroke-linejoin="round"/></svg>
  <!-- arduino -->
  <svg style="left:773px;top:13px" width="24" height="22" viewBox="0 0 24 22"><circle cx="12" cy="11" r="11" fill="#1b9a9e"/><path d="M12 11 C10.6 8.6 9 7.6 7.2 7.6 A3.4 3.4 0 0 0 7.2 14.4 C9 14.4 10.6 13.4 12 11 C13.4 8.6 15 7.6 16.8 7.6 A3.4 3.4 0 0 1 16.8 14.4 C15 14.4 13.4 13.4 12 11 Z" fill="none" stroke="#fff" stroke-width="1.7"/><path d="M5.8 11 H8.6 M15.4 11 H18.2 M16.8 9.6 V12.4" stroke="#fff" stroke-width=".9"/></svg>
  <div class="dot" style="left:782px"></div>
  <!-- tray -->
  <svg style="left:1342px;top:20.5px" width="11" height="7" viewBox="0 0 11 7"><path d="M0.6 6.2 L5.5 1 L10.4 6.2" fill="none" stroke="#1b1b1b" stroke-width="1.3"/></svg>
  <svg style="left:1370px;top:17px" width="18" height="14" viewBox="0 0 18 14"><path d="M4.6 11.6 A3.3 3.3 0 0 1 4 5.1 A4.6 4.6 0 0 1 12.6 4.2 A3.8 3.8 0 0 1 13.2 11.6 Z" fill="#c8c8c0" stroke="#2a2a2a" stroke-width="1.1"/><path d="M2 0.8 L15.6 13.4" stroke="#2a2a2a" stroke-width="1.2"/></svg>
  <svg style="left:1402.5px;top:15.5px" width="17" height="17" viewBox="0 0 17 17"><circle cx="8.5" cy="8.5" r="8.3" fill="#0a0a0a"/><g fill="none" stroke="#fff" stroke-width=".8"><path d="M5 4 V12.6 H6.6 A2.1 2.1 0 0 0 6.6 8.3 H5 M5 8.3 H6.4 A2.1 2.1 0 0 0 6.4 4 H5"/><circle cx="11" cy="10.4" r="2.2"/><path d="M9 4 H12.6 M10.6 4 V8.2"/></g></svg>
  <svg style="left:1435px;top:15.5px" width="17" height="17" viewBox="0 0 17 17"><path d="M7.4 0.4 C5.4 1.8 3.2 2.4 0.6 2.6 C0.4 8.6 2.4 12.8 7.4 15.4 C12.4 12.8 14.4 8.6 14.2 2.6 C11.6 2.4 9.4 1.8 7.4 0.4 Z" fill="#35a3ea"/><path d="M7.4 0.4 V15.4 C2.4 12.8 0.4 8.6 0.6 2.6 C3.2 2.4 5.4 1.8 7.4 0.4 Z" fill="#1d8ad8"/><circle cx="11.8" cy="12" r="4.6" fill="#18a038" stroke="#e6efb8" stroke-width=".7"/><path d="M9.6 12 L11.2 13.6 L14 10.6" fill="none" stroke="#fff" stroke-width="1.3"/></svg>
  <svg style="left:1467px;top:18px" width="16" height="12" viewBox="0 0 16 12"><g fill="none" stroke="#1b1b1b" stroke-width="1.2" stroke-linecap="round"><path d="M0.8 4.2 A10 10 0 0 1 15.2 4.2"/><path d="M3.2 6.8 A6.6 6.6 0 0 1 12.8 6.8"/><path d="M5.6 9.2 A3.3 3.3 0 0 1 10.4 9.2"/></g><circle cx="8" cy="10.8" r="1" fill="#1b1b1b"/></svg>
  <svg style="left:1490.5px;top:18.5px" width="15" height="12" viewBox="0 0 15 12"><path d="M0.7 4 H3 L6.4 0.8 V11.2 L3 8 H0.7 Z" fill="none" stroke="#1b1b1b" stroke-width="1.1" stroke-linejoin="round"/><path d="M8.6 4 A2.8 2.8 0 0 1 8.6 8 M10.6 2.2 A5.4 5.4 0 0 1 10.6 9.8" fill="none" stroke="#1b1b1b" stroke-width="1.1" stroke-linecap="round"/><path d="M12.6 0.6 A7.6 7.6 0 0 1 12.6 11.4" fill="none" stroke="#9aa08a" stroke-width="1" stroke-linecap="round"/></svg>
  <div id="clk">18:08<br>07.03.2026</div>
</div>
</body>
</html>
